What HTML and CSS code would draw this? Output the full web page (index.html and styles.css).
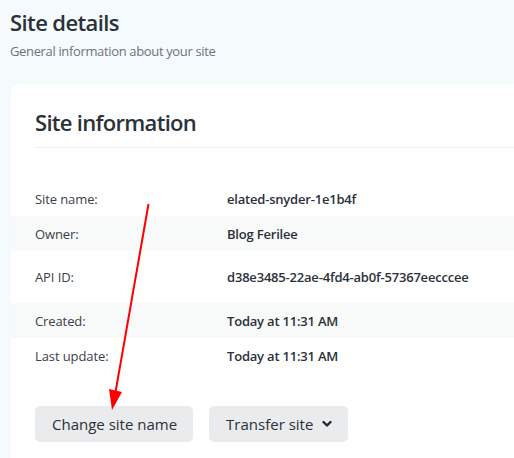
FILE: index.html
```html
<!DOCTYPE html>
<html>
<head>
<meta charset="utf-8">
<link rel="stylesheet" href="styles.css">
</head>
<body>
<div class="page">
  <header class="page-header">
    <h1 class="page-title">Site details</h1>
    <p class="page-subtitle">General information about your site</p>
  </header>
  <section class="card">
    <h2 class="card-title">Site information</h2>
    <div class="info">
      <div class="row"><span class="label">Site name:</span><span class="value">elated-snyder-1e1b4f</span></div>
      <div class="row striped"><span class="label">Owner:</span><span class="value">Blog Ferilee</span></div>
      <div class="row tall"><span class="label">API ID:</span><span class="value">d38e3485-22ae-4fd4-ab0f-57367eecccee</span></div>
      <div class="row striped"><span class="label">Created:</span><span class="value">Today at 11:31 AM</span></div>
      <div class="row"><span class="label">Last update:</span><span class="value">Today at 11:31 AM</span></div>
    </div>
    <div class="actions">
      <button class="btn">Change site name</button>
      <button class="btn">Transfer site
        <svg class="chev" width="10" height="8" viewBox="0 0 10 8"><path d="M1.5 2 L5 5.5 L8.5 2" fill="none" stroke="#1f2937" stroke-width="2.4" stroke-linecap="round" stroke-linejoin="round"/></svg>
      </button>
    </div>
  </section>
  <svg class="annotation" width="514" height="458" viewBox="0 0 514 458">
    <line x1="148.5" y1="204" x2="115" y2="395" stroke="#ff0000" stroke-width="2"/>
    <polygon points="109,389 122,392 112,410" fill="#ff0000"/>
  </svg>
</div>
</body>
</html>
```
FILE: styles.css
```css
html, body {
  margin: 0;
  padding: 0;
}
body {
  background: #f5fbfc;
  font-family: "Open Sans", "Noto Sans", sans-serif;
  color: #2e3440;
  width: 514px;
  height: 458px;
  overflow: hidden;
}
.page {
  position: relative;
  height: 458px;
}
.page-header {
  padding: 7px 0 0 10px;
}
.page-title {
  margin: 0;
  font-size: 22px;
  font-weight: 600;
  line-height: 30px;
  letter-spacing: -0.6px;
  color: #2b313a;
}
.page-subtitle {
  margin: 5px 0 0 0;
  font-size: 13px;
  line-height: 18px;
  letter-spacing: -0.35px;
  color: #6d737c;
}
.card {
  margin: 24px 0 0 11px;
  background: #fff;
  border-radius: 8px 0 0 0;
  padding: 24px 0 0 0;
  height: 350px;
  box-shadow: 0 0 2px rgba(0,0,0,0.04);
}
.card-title {
  margin: 0 0 0 24px;
  padding-bottom: 11px;
  font-size: 22px;
  font-weight: 600;
  line-height: 28px;
  letter-spacing: -0.7px;
  color: #2b313a;
  border-bottom: 1px solid #eff1f3;
}
.info {
  margin-top: 33px;
}
.row {
  display: flex;
  align-items: center;
  height: 35px;
  font-size: 13px;
}
.row.tall {
  height: 52px;
}
.row.striped {
  background: #f8f9f9;
}
.label {
  width: 192px;
  padding-left: 24px;
  color: #3a414c;
  letter-spacing: -0.1px;
}
.value {
  font-weight: 600;
  color: #2b313a;
  letter-spacing: -0.2px;
}
.actions {
  display: flex;
  gap: 16px;
  margin: 33px 0 0 24px;
}
.btn {
  font-family: inherit;
  font-size: 15px;
  color: #2b313a;
  background: #e9ebed;
  border: none;
  border-radius: 5px;
  height: 36px;
  padding: 0 16px 0 17px;
  display: flex;
  align-items: center;
  gap: 9px;
}
.chev {
  display: block;
}
.annotation {
  position: absolute;
  left: 0;
  top: 0;
  pointer-events: none;
}
```
